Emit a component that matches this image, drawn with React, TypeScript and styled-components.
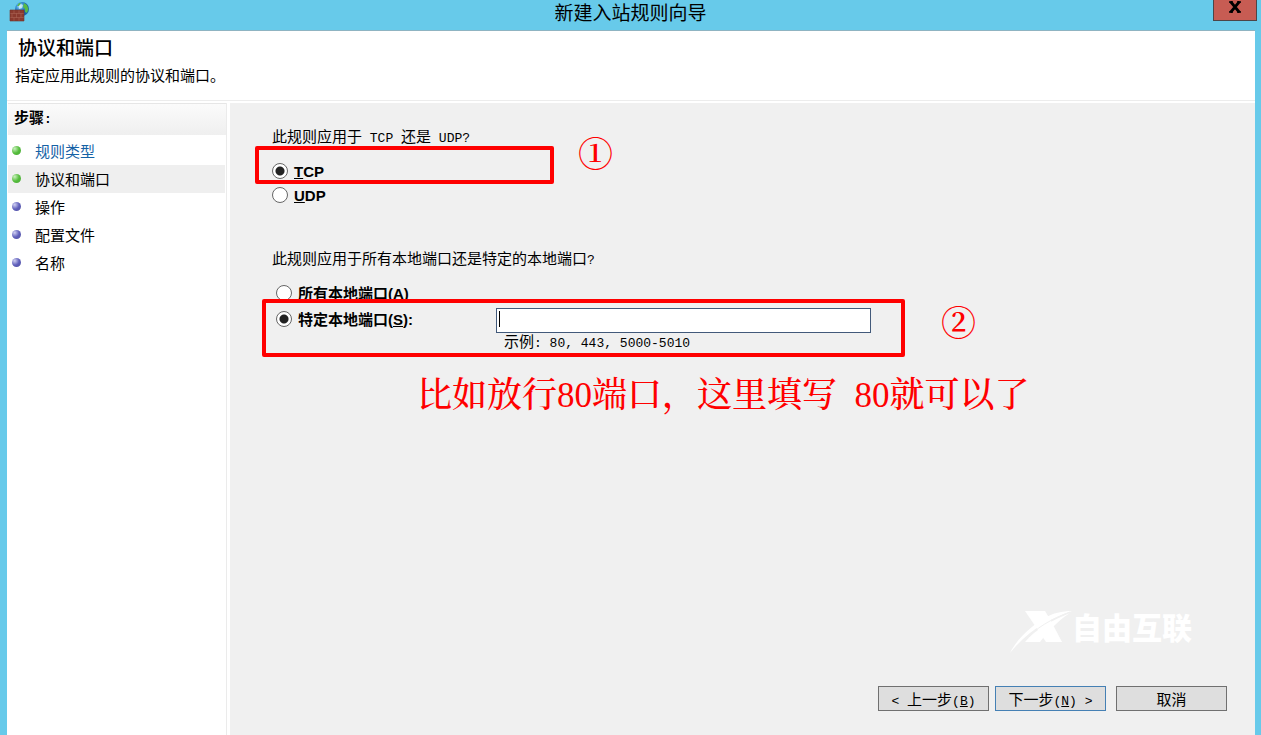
import React from "react";
import styled, { createGlobalStyle } from "styled-components";

const GlobalStyle = createGlobalStyle`
  *, *::before, *::after { box-sizing: border-box; }
  body {
    margin: 0;
    background: #67caea;
    color: #000;
    font: 15px/20px "Noto Sans CJK SC", sans-serif;
  }
`;

const Window = styled.div`
  display: flex;
  flex-direction: column;
  min-height: 100vh;
  padding: 0 6px 0 7px;
  background: #67caea;
`;

const TitleBar = styled.header`
  position: relative;
  display: flex;
  align-items: flex-start;
  justify-content: center;
  height: 31px;
  margin: 0 -6px 0 -7px;
`;

const WindowTitle = styled.h1`
  margin: 0;
  font-size: 19px;
  line-height: 24px;
  font-weight: 400;
`;

const AppIcon = styled.svg`
  position: absolute;
  left: 9px;
  top: 1px;
`;

const CloseButton = styled.button`
  position: absolute;
  right: 4px;
  top: 0;
  display: flex;
  justify-content: center;
  width: 44px;
  height: 21px;
  padding: 1px 0 0;
  border: 1px solid #4d4547;
  border-top: 0;
  background: #c75c53;
`;

const PageHeader = styled.section`
  height: 71px;
  padding: 6px 8px 0;
  border-top: 1px solid #8fb4c2;
  border-bottom: 1px solid #ececec;
  margin-top: -1px;
  background: #fff;
`;

const PageTitle = styled.h2`
  margin: 0 0 8px;
  padding-left: 3px;
  font-size: 19px;
  line-height: 20px;
  font-weight: 500;
`;

const Text = styled.p`
  margin: 0;
`;

const Latin = styled.span`
  font-family: "Liberation Mono", monospace;
  font-size: 13px;
  line-height: 1;
  white-space: pre;
`;

const Body = styled.div`
  flex: 1;
  display: flex;
  gap: 3px;
  padding-top: 2px;
  background: #fff;
`;

const Sidebar = styled.nav`
  flex: none;
  width: 220px;
  padding-left: 1px;
  border-right: 1px solid #ebebeb;
`;

const SidebarTitle = styled.h3`
  margin: 0 0 2px;
  padding: 3px 6px 8px;
  height: 32px;
  border-top: 1px solid #e6e6e6;
  background: linear-gradient(#fbfbfb, #efefef);
  font-size: 15px;
  line-height: 20px;
  font-weight: 700;
`;

const StepList = styled.ul`
  margin: 0;
  padding: 0;
  list-style: none;
`;

const Step = styled.li<{ $current?: boolean }>`
  display: flex;
  align-items: center;
  gap: 14px;
  height: 28px;
  margin-right: 1px;
  padding: 0 0 1px 4px;
  line-height: 18px;
  background: ${(p) => (p.$current ? "#efefef" : "transparent")};
`;

const Dot = styled.span<{ $done?: boolean }>`
  width: 9px;
  height: 9px;
  border-radius: 50%;
  background: ${(p) =>
    p.$done
      ? "radial-gradient(circle at 30% 30%, #c9f0bd, #55bd3c 50%, #4aa838)"
      : "radial-gradient(circle at 30% 30%, #cfcff2, #5f5fbb 50%, #5050a0)"};
`;

const StepLink = styled.a`
  color: #1562a6;
  text-decoration: none;
`;

const Content = styled.main`
  flex: 1;
  display: flex;
  flex-direction: column;
  padding: 24px 28px 24px 42px;
  background: #f0f0f0;
`;

const Section = styled.section`
  position: relative;
  margin-bottom: 42px;
`;

const Group = styled.fieldset`
  min-width: 0;
  margin: 0;
  padding: 0;
  border: 0;
`;

const Question = styled.legend`
  height: 20px;
  margin-bottom: 12px;
  padding: 0;
  line-height: 18px;
`;

const PortOptions = styled.div`
  padding-left: 4px;
`;

const Option = styled.label`
  display: flex;
  align-items: center;
  gap: 6px;
  height: 24px;
  font-family: "Liberation Sans", "Noto Sans CJK SC", sans-serif;
  font-weight: 700;
  line-height: 22px;

  span {
    padding-top: 2px;
  }
`;

const Radio = styled.input.attrs({ type: "radio" })`
  appearance: none;
  width: 16px;
  height: 16px;
  margin: 0;
  border: 1px solid #666;
  border-radius: 50%;
  background: #fff;
  &:checked {
    background: radial-gradient(circle, #222 0 4px, #fff 5px);
  }
`;

const PortRow = styled.div`
  display: grid;
  grid-template-columns: 220px minmax(0, 375px);
  padding-top: 2px;
`;

const PortField = styled.div`
  position: relative;
  padding-top: 1px;
`;

const PortInput = styled.input`
  display: block;
  width: 100%;
  height: 25px;
  padding: 0 4px;
  border: 1px solid #42597a;
  background: #fff;
  font: inherit;
  outline: 0;
`;

const Caret = styled.span`
  position: absolute;
  left: 3px;
  top: 4px;
  width: 1px;
  height: 16px;
  background: #000;
`;

const Example = styled.p`
  margin: 0;
  padding-left: 8px;
  line-height: 16px;
`;

const Highlight = styled.div<{ $x: number; $y: number; $w: number; $h: number }>`
  position: absolute;
  left: ${(p) => p.$x}px;
  top: ${(p) => p.$y}px;
  width: ${(p) => p.$w}px;
  height: ${(p) => p.$h}px;
  border: 4px solid #f00;
  border-radius: 2px;
  pointer-events: none;
`;

const Mark = styled.span<{ $x: number; $y: number }>`
  position: absolute;
  left: ${(p) => p.$x}px;
  top: ${(p) => p.$y}px;
  color: #f00;
  font-family: "Noto Serif CJK SC", "Noto Sans CJK SC", serif;
  font-size: 35px;
  line-height: 40px;
  font-weight: 600;
`;

const Note = styled.p`
  position: absolute;
  left: 145px;
  top: 127px;
  margin: 0;
  color: #f00;
  font-family: "Liberation Serif", "Noto Serif CJK SC", "Noto Sans CJK SC", serif;
  font-size: 35px;
  line-height: 40px;
  font-weight: 500;
  white-space: pre;
`;

const Footer = styled.footer`
  display: flex;
  flex-direction: column;
  align-items: flex-end;
  gap: 33px;
  margin-top: auto;
`;

const Brand = styled.div`
  display: flex;
  align-items: flex-start;
  margin-right: 35px;
  color: #fff;
  font-size: 30px;
  line-height: 42px;
  font-weight: 900;
`;

const Actions = styled.div`
  display: flex;
  gap: 6px;
`;

const Button = styled.button<{ $primary?: boolean; $apart?: boolean }>`
  width: 111px;
  height: 25px;
  margin-left: ${(p) => (p.$apart ? 4 : 0)}px;
  padding: 0;
  border: 1px solid ${(p) => (p.$primary ? "#4580b4" : "#707070")};
  background: #dedede;
  color: #000;
  font: inherit;
`;

export default function App() {
  return (
    <>
      <GlobalStyle />
      <Window>
        <TitleBar>
          <AppIcon width="21" height="21" viewBox="0 0 21 21" aria-hidden="true">
            <defs>
              <radialGradient id="globe" cx="35%" cy="30%">
                <stop offset="0" stopColor="#c5eaff" />
                <stop offset=".5" stopColor="#3b95d8" />
                <stop offset="1" stopColor="#1761ab" />
              </radialGradient>
            </defs>
            <circle cx="13" cy="8" r="7" fill="url(#globe)" />
            <path d="M15 2l3 2 1.500 4-1.500 4-2-1 0-3-2-2zM8 5l2-3 2 0-2 3z" fill="#58b947" />
            <path d="M10 5l2-2 2 1-1 3-3 1z" fill="#d8f4f4" opacity=".7" />
            <rect x="1" y="9" width="14" height="11" fill="#8a3a2e" />
            <path d="M1 12.500h14M1 16.500h14M5 9v3.500M10 9v3.500M3 12.500v4M7.500 12.500v4M12 12.500v4M5 16.500V20M10 16.500V20" stroke="#b06c5c" strokeWidth=".5" />
            <path d="M1 20V9h14v11z" fill="none" stroke="#70352e" strokeWidth=".6" />
          </AppIcon>
          <WindowTitle>新建入站规则向导</WindowTitle>
          <CloseButton aria-label="关闭">
            <svg width="14" height="12" viewBox="0 0 14 12" aria-hidden="true">
              <path d="M2.500 .5L11.500 11.500M11.500 .5L2.500 11.500" stroke="#000" strokeWidth="2.800" />
              <path d="M1 1h4M9 1h4M1 11h4M9 11h4" stroke="#000" strokeWidth="1.500" />
            </svg>
          </CloseButton>
        </TitleBar>
        <PageHeader>
          <PageTitle>协议和端口</PageTitle>
          <Text>指定应用此规则的协议和端口。</Text>
        </PageHeader>
        <Body>
          <Sidebar>
            <SidebarTitle>步骤<Latin>:</Latin></SidebarTitle>
            <StepList>
              <Step><Dot $done /><StepLink href="#type">规则类型</StepLink></Step>
              <Step $current aria-current="step"><Dot $done />协议和端口</Step>
              <Step><Dot />操作</Step>
              <Step><Dot />配置文件</Step>
              <Step><Dot />名称</Step>
            </StepList>
          </Sidebar>
          <Content>
            <Section>
              <Group>
                <Question>
                  此规则应用于<Latin> TCP </Latin>还是<Latin> UDP?</Latin>
                </Question>
                <Option><Radio name="protocol" defaultChecked /><span><u>T</u>CP</span></Option>
                <Option><Radio name="protocol" /><span><u>U</u>DP</span></Option>
              </Group>
              <Highlight $x={-17} $y={19} $w={299} $h={38} />
              <Mark $x={306} $y={5}>①</Mark>
            </Section>
            <Section>
              <Group>
                <Question>此规则应用于所有本地端口还是特定的本地端口<Latin>?</Latin></Question>
                <PortOptions>
                  <Option><Radio name="ports" /><span>所有本地端口(<u>A</u>)</span></Option>
                  <PortRow>
                    <Option><Radio name="ports" defaultChecked /><span>特定本地端口(<u>S</u>):</span></Option>
                    <PortField>
                      <PortInput aria-label="特定本地端口" />
                      <Caret />
                      <Example>示例<Latin>: 80, 443, 5000-5010</Latin></Example>
                    </PortField>
                  </PortRow>
                </PortOptions>
              </Group>
              <Highlight $x={-10} $y={50} $w={643} $h={58} />
              <Mark $x={669} $y={52}>②</Mark>
              <Note>比如放行80端口，这里填写{"\u00a0\u00a0"}80就可以了</Note>
            </Section>
            <Footer>
              <Brand>
                <svg width="63" height="48" viewBox="0 0 63 48" aria-hidden="true">
                  <path d="M16 6h20l6 10 11 21H37z" fill="#fff" />
                  <path d="M1 48C8 34 22 21 36 13 44 8 53 6 63 6 43 13 20 24 1 48z" fill="#fff" />
                  <path d="M16 37C27 24 42 16 61 8 51 14 41 24 31 37z" fill="#fff" />
                  <path d="M15 36C27 23 42 14 61 7" fill="none" stroke="#f0f0f0" />
                </svg>
                自由互联
              </Brand>
              <Actions>
                <Button><Latin>{"< "}</Latin>上一步<Latin>(<u>B</u>)</Latin></Button>
                <Button $primary>下一步<Latin>(<u>N</u>){" >"}</Latin></Button>
                <Button $apart>取消</Button>
              </Actions>
            </Footer>
          </Content>
        </Body>
      </Window>
    </>
  );
}
